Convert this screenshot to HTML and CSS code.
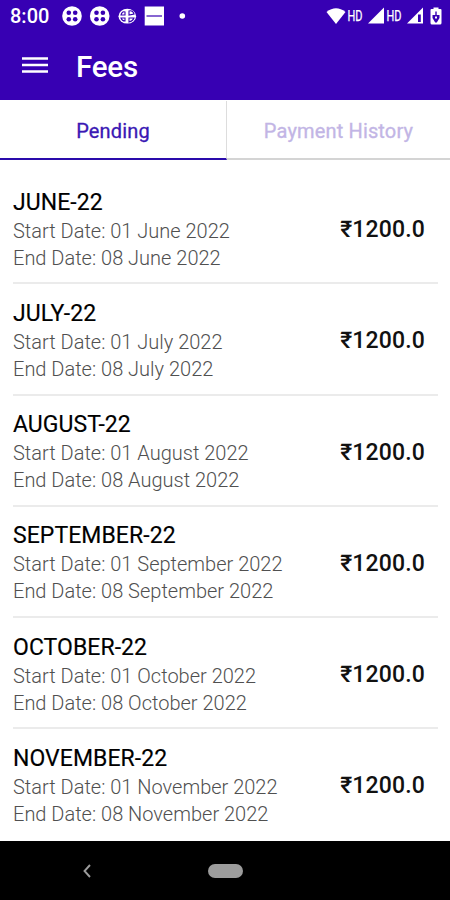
FILE: index.html
```html
<!DOCTYPE html>
<html lang="en">
<head>
<meta charset="utf-8">
<title>Fees</title>
<link rel="stylesheet" href="styles.css">
</head>
<body>
<header class="header">
  <div class="status">
    <span class="clock">8:00</span>
    <svg class="notices" width="130" height="20" viewBox="0 0 130 20">
      <g id="clover">
        <circle cx="10" cy="10" r="9.8" fill="#fff"/>
        <g fill="#3700b3"><circle cx="6.800" cy="6.800" r="2.300"/><circle cx="13.200" cy="6.800" r="2.300"/><circle cx="6.800" cy="13.200" r="2.300"/><circle cx="13.200" cy="13.200" r="2.300"/></g>
      </g>
      <use href="#clover" x="27.700"/>
      <ellipse cx="65.300" cy="10.200" rx="8.800" ry="7.400" fill="#fff"/>
      <path d="M59 9q1-4 4-3v3zM67 5q4-1 5 3l-5 1zM59 12l4 0v3q-3 0-4-3zM67 12h5q-1 3-5 4z" fill="none" stroke="#3700b3" stroke-width="1.100"/>
      <path fill="#fff" d="M82.700.5H102V19.500H82.700z"/>
      <path d="M84.500 10h15.500" stroke="#3700b3" stroke-width="1.200"/>
      <circle cx="120.300" cy="10" r="2.800" fill="#fff"/>
    </svg>
    <div class="signals">
      <svg width="20" height="18" viewBox="0 0 20 18"><path fill="#fff" d="M.5 5Q10-2.500 19.500 5L10 17z"/></svg>
      <svg class="hd" width="17" height="24" viewBox="0 0 17 24"><text x=".5" y="17" textLength="15" lengthAdjust="spacingAndGlyphs">HD</text></svg>
      <svg class="cell" width="16" height="17" viewBox="0 0 16 17"><path fill="#fff" d="M0 16.500 16 .5v16z"/></svg>
      <svg class="hd" width="17" height="24" viewBox="0 0 17 24"><text x=".5" y="17" textLength="15" lengthAdjust="spacingAndGlyphs">HD</text></svg>
      <svg class="cell" width="16" height="17" viewBox="0 0 16 17"><path fill="#fff" d="M0 16.500 16 .5v16z"/><path fill="#3700b3" d="M11 7.500h2.800V15H11z"/></svg>
      <svg class="battery" width="12" height="18" viewBox="0 0 12 18"><path fill="#fff" d="M3.500 2V.5h5V2h2q1 0 1 1v13q0 1.500-1.500 1.500H2Q.5 17.500.5 16V3q0-1 1-1z"/><path fill="#3700b3" d="M5.300 4.500h1.400V8H9.500v3L6.800 15.500H5.200L2.500 11V8h2.800z"/><path fill="#fff" d="M5 9.500h2v2H5z"/></svg>
    </div>
  </div>
  <div class="toolbar">
    <svg width="26" height="18" viewBox="0 0 26 18"><path d="M0 2.500h26M0 9h26M0 15.500h26" stroke="#fff" stroke-width="2.600"/></svg>
    <h1 class="title">Fees</h1>
  </div>
</header>
<nav class="tabs">
  <div class="tab active">Pending</div>
  <div class="tab">Payment History</div>
</nav>
<main class="list">
  <section class="fee"><div><h2 class="month">JUNE-22</h2><p class="date">Start Date: 01 June 2022</p><p class="date">End Date: 08 June 2022</p></div><span class="amount">₹1200.0</span></section>
  <section class="fee"><div><h2 class="month">JULY-22</h2><p class="date">Start Date: 01 July 2022</p><p class="date">End Date: 08 July 2022</p></div><span class="amount">₹1200.0</span></section>
  <section class="fee"><div><h2 class="month">AUGUST-22</h2><p class="date">Start Date: 01 August 2022</p><p class="date">End Date: 08 August 2022</p></div><span class="amount">₹1200.0</span></section>
  <section class="fee"><div><h2 class="month">SEPTEMBER-22</h2><p class="date">Start Date: 01 September 2022</p><p class="date">End Date: 08 September 2022</p></div><span class="amount">₹1200.0</span></section>
  <section class="fee"><div><h2 class="month">OCTOBER-22</h2><p class="date">Start Date: 01 October 2022</p><p class="date">End Date: 08 October 2022</p></div><span class="amount">₹1200.0</span></section>
  <section class="fee"><div><h2 class="month">NOVEMBER-22</h2><p class="date">Start Date: 01 November 2022</p><p class="date">End Date: 08 November 2022</p></div><span class="amount">₹1200.0</span></section>
</main>
<footer class="navbar">
  <svg width="8" height="14" viewBox="0 0 8 14"><path d="M7 1 1.500 7 7 13" fill="none" stroke="#9c9c9c" stroke-width="1.900"/></svg>
  <span class="home"></span>
</footer>
</body>
</html>
```
FILE: styles.css
```css
* { box-sizing: border-box; }
body {
  margin: 0;
  width: 450px;
  height: 900px;
  display: flex;
  flex-direction: column;
  overflow: hidden;
  background: #fff;
  font-family: Roboto, sans-serif;
}
h1, h2, p { margin: 0; }
svg { display: block; flex: none; }
.header { height: 100px; flex: none; background: #3700b3; color: #fff; }
.status { height: 32px; display: flex; align-items: center; padding: 0 8px 0 10px; }
.clock { width: 52px; font-size: 20px; font-weight: 500; line-height: 32px; }
.notices { margin-top: -1px; }
.signals { display: flex; align-items: center; margin-left: auto; margin-top: -1px; }
.hd { margin-left: 1px; overflow: visible; }
.hd text { font-size: 15px; fill: #fff; stroke: #fff; stroke-width: .25px; }
.cell { margin-left: 4px; }
.cell + .hd { margin-left: 2px; }
.battery { margin-left: 7px; }
.toolbar { height: 68px; display: flex; align-items: center; gap: 28px; padding: 0 22px 2px; }
.title { font-size: 29.500px; font-weight: 500; line-height: 36px; padding-top: 3px; letter-spacing: -.2px; }
.tabs { display: flex; height: 60px; flex: none; padding-top: 1px; }
.tab {
  flex: 1;
  text-align: center;
  font-size: 20px;
  line-height: 61px;
  font-weight: 400;
  letter-spacing: .15px;
  -webkit-text-stroke: .3px currentColor;
  color: #c2b5e5;
  border-bottom: 2px solid #d4d4d4;
}
.tab.active { flex: 0 0 227px; color: #3a18b4; border-bottom-color: #2a0bab; border-right: 1px solid #ddd; }
.list { height: 681px; flex: none; padding: 13px 12px 0 13px; overflow: hidden; }
.fee {
  height: 111.250px;
  display: flex;
  justify-content: space-between;
  border-bottom: 2px solid #ebebeb;
  padding: 14.500px 13px 0 0;
}
.fee:last-child { border-bottom: 0; }
.month { font-size: 23px; line-height: 30px; font-weight: 400; color: #000; letter-spacing: .06px; -webkit-text-stroke: .15px #000; }
.date { font-size: 20px; line-height: 27px; font-weight: 300; color: #505050; }
.amount { margin-top: 27.500px; font-size: 23px; line-height: 30px; font-weight: 500; color: #111; letter-spacing: .15px; }
.navbar { flex: 1; display: flex; align-items: center; background: #000; padding-left: 83px; }
.home { width: 35px; height: 14px; border-radius: 7px; background: #9c9c9c; margin-left: 117px; }
```
